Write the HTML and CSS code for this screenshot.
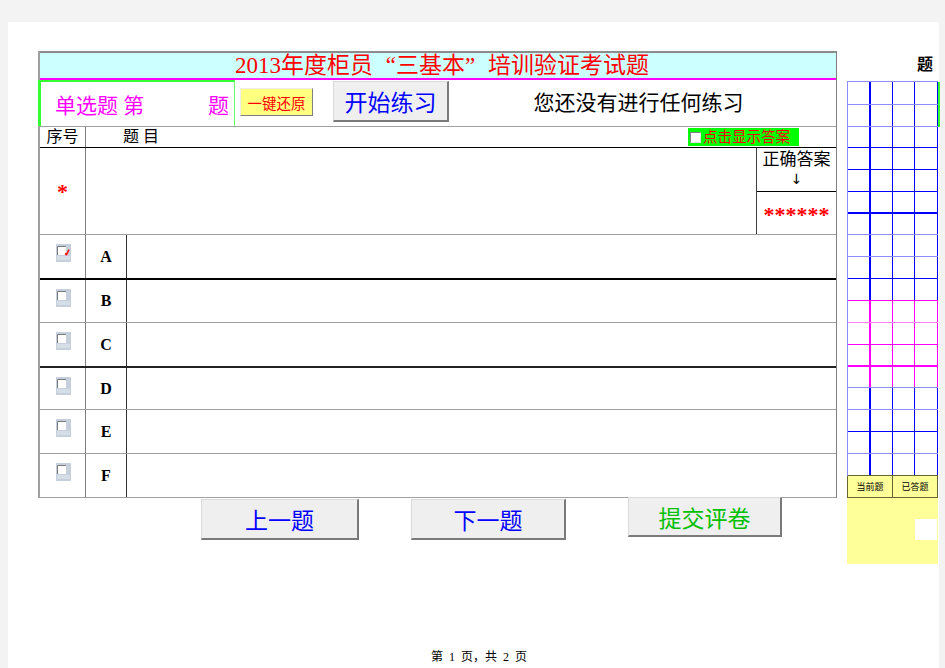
FILE: index.html
```html
<!DOCTYPE html>
<html lang="zh-CN">
<head>
<meta charset="utf-8">
<title>2013年度柜员“三基本”培训验证考试题</title>
<link rel="stylesheet" href="styles.css">
</head>
<body>
<div class="sheet">
  <div class="main">
    <div class="paper">
      <div class="frame">
        <div class="title">2013年度柜员<span class="ql">“</span>三基本<span class="qr">”</span>培训验证考试题</div>
        <div class="toolbar">
          <div class="qtype"><span>单选题 第</span><span>题</span></div>
          <div class="btn-reset">一键还原</div>
          <div class="btn btn-start">开始练习</div>
          <div class="status">您还没有进行任何练习</div>
        </div>
        <div class="head">
          <div class="c1">序号</div>
          <div class="c2">题&nbsp;目</div>
          <div class="show"><span class="box"></span>点击显示答案</div>
        </div>
        <div class="question">
          <div class="c1 star">*</div>
          <div class="qbody"></div>
          <div class="answer">
            <div class="ans-top">正确答案<br><span class="arrow">↓</span></div>
            <div class="ans-val">******</div>
          </div>
        </div>
        <div class="opt r-a">
          <div class="c1"><svg class="cb" width="15" height="18" viewBox="0 0 15 18"><rect width="15" height="18" fill="#c5d0dc"/><rect x="1" y="2" width="9" height="9" fill="#fff"/><path d="M1.5 11V2.5H10" stroke="#7a7a7a" fill="none"/><rect x="1" y="12" width="13" height="4" fill="#d5dde6"/><path d="M9 9.5 L10.5 10.5 L13 5.5" stroke="#ff1010" stroke-width="1.6" fill="none"/></svg></div>
          <div class="letter">A</div>
          <div class="ocell"></div>
        </div>
        <div class="opt r-b">
          <div class="c1"><svg class="cb" width="15" height="18" viewBox="0 0 15 18"><rect width="15" height="18" fill="#c5d0dc"/><rect x="1" y="2" width="9" height="9" fill="#fff"/><path d="M1.5 11V2.5H10" stroke="#7a7a7a" fill="none"/><rect x="1" y="12" width="13" height="4" fill="#d5dde6"/></svg></div>
          <div class="letter">B</div>
          <div class="ocell"></div>
        </div>
        <div class="opt r-c">
          <div class="c1"><svg class="cb" width="15" height="18" viewBox="0 0 15 18"><rect width="15" height="18" fill="#c5d0dc"/><rect x="1" y="2" width="9" height="9" fill="#fff"/><path d="M1.5 11V2.5H10" stroke="#7a7a7a" fill="none"/><rect x="1" y="12" width="13" height="4" fill="#d5dde6"/></svg></div>
          <div class="letter">C</div>
          <div class="ocell"></div>
        </div>
        <div class="opt r-d">
          <div class="c1"><svg class="cb" width="15" height="18" viewBox="0 0 15 18"><rect width="15" height="18" fill="#c5d0dc"/><rect x="1" y="2" width="9" height="9" fill="#fff"/><path d="M1.5 11V2.5H10" stroke="#7a7a7a" fill="none"/><rect x="1" y="12" width="13" height="4" fill="#d5dde6"/></svg></div>
          <div class="letter">D</div>
          <div class="ocell"></div>
        </div>
        <div class="opt r-e">
          <div class="c1"><svg class="cb" width="15" height="18" viewBox="0 0 15 18"><rect width="15" height="18" fill="#c5d0dc"/><rect x="1" y="2" width="9" height="9" fill="#fff"/><path d="M1.5 11V2.5H10" stroke="#7a7a7a" fill="none"/><rect x="1" y="12" width="13" height="4" fill="#d5dde6"/></svg></div>
          <div class="letter">E</div>
          <div class="ocell"></div>
        </div>
        <div class="opt r-f">
          <div class="c1"><svg class="cb" width="15" height="18" viewBox="0 0 15 18"><rect width="15" height="18" fill="#c5d0dc"/><rect x="1" y="2" width="9" height="9" fill="#fff"/><path d="M1.5 11V2.5H10" stroke="#7a7a7a" fill="none"/><rect x="1" y="12" width="13" height="4" fill="#d5dde6"/></svg></div>
          <div class="letter">F</div>
          <div class="ocell"></div>
        </div>
      </div>
      <div class="nav">
        <div class="btn prev">上一题</div>
        <div class="btn next">下一题</div>
        <div class="btn submit">提交评卷</div>
      </div>
    </div>
    <div class="side">
      <div class="side-head">题</div>
      <div class="side-body">
        <div class="grid">
          <div class="row lt h23"><span></span><span></span><span></span><span></span></div>
          <div class="row lt"><span></span><span></span><span></span><span></span></div>
          <div class="row h21"><span></span><span></span><span></span><span></span></div>
          <div class="row"><span></span><span></span><span></span><span></span></div>
          <div class="row"><span></span><span></span><span></span><span></span></div>
          <div class="row thick"><span></span><span></span><span></span><span></span></div>
          <div class="row lt h21"><span></span><span></span><span></span><span></span></div>
          <div class="row lt"><span></span><span></span><span></span><span></span></div>
          <div class="row"><span></span><span></span><span></span><span></span></div>
          <div class="row mgb"><span></span><span></span><span></span><span></span></div>
          <div class="row mg mgl"><span></span><span></span><span></span><span></span></div>
          <div class="row mg mgb"><span></span><span></span><span></span><span></span></div>
          <div class="row mg mgb thick"><span></span><span></span><span></span><span></span></div>
          <div class="row mg lt h21"><span></span><span></span><span></span><span></span></div>
          <div class="row lt"><span></span><span></span><span></span><span></span></div>
          <div class="row"><span></span><span></span><span></span><span></span></div>
          <div class="row lt"><span></span><span></span><span></span><span></span></div>
          <div class="row olive"><span></span><span></span><span></span><span></span></div>
          <div class="legend"><span>当前题</span><span>已答题</span></div>
          <div class="yblock"><div class="white"></div></div>
        </div>
        <div class="gbar"></div>
      </div>
    </div>
  </div>
  <div class="pagefoot">第 1 页，共 2 页</div>
</div>
</body>
</html>
```

FILE: styles.css
```css
* { box-sizing: border-box; }
html, body { margin: 0; padding: 0; }
body {
  background: #f3f3f3;
  font-family: "Liberation Serif", "Noto Sans CJK SC", serif;
  color: #000;
}
.sheet {
  margin: 22px 0 0 8px;
  width: 931px;
  height: 646px;
  background: #fff;
  padding: 29px 0 4px 30px;
  display: flex;
  flex-direction: column;
}
.main { display: flex; align-items: flex-start; }
.paper { flex: none; width: 799px; }
.frame {
  border-left: 2px solid #a0a0a0;
  border-right: 1px solid #808080;
}
.title {
  height: 29px;
  border-top: 2px solid #8c8c8c;
  border-bottom: 2px solid #ff00ff;
  background: #ccffff;
  color: #ff0000;
  font-size: 23px;
  line-height: 25px;
  text-align: center;
  padding-left: 8px;
  white-space: nowrap;
}
.ql, .qr { display: inline-block; width: 1em; }
.ql { text-align: right; }
.qr { text-align: left; }

.toolbar { display: flex; align-items: flex-start; height: 46px; }
.qtype {
  flex: none;
  width: 197px;
  height: 46px;
  margin-left: -2px;
  border-left: 3px solid #33ff33;
  border-top: 2px solid #33ff33;
  border-right: 1px solid #66ff66;
  display: flex;
  justify-content: space-between;
  align-items: center;
  padding: 0 5px 0 14px;
  color: #ff00ff;
  font-size: 21px;
  white-space: nowrap;
}
.btn-reset {
  flex: none;
  width: 73px;
  height: 28px;
  margin: 8px 0 0 5px;
  background: #ffff80;
  border: 1px solid;
  border-color: #eeeeee #808080 #808080 #eeeeee;
  color: #ff0000;
  font-size: 14.5px;
  display: flex;
  align-items: center;
  justify-content: center;
}
.btn {
  flex: none;
  background: #efefef;
  border-style: solid;
  border-width: 1px 2px 2px 1px;
  border-color: #dadada #7a7a7a #7a7a7a #dadada;
  display: flex;
  align-items: center;
  justify-content: center;
  white-space: nowrap;
}
.btn-start {
  width: 116px;
  height: 41px;
  margin: 1px 0 0 20px;
  color: #0000ff;
  font-size: 23px;
}
.status {
  flex: 1;
  text-align: center;
  line-height: 46px;
  font-size: 21px;
  padding-right: 8px;
  white-space: nowrap;
}

.head {
  display: flex;
  height: 22px;
  border-top: 1px solid #a0a0a0;
  border-bottom: 1px solid #000;
  font-size: 16px;
  line-height: 20px;
}
.c1 {
  flex: none;
  width: 46px;
  border-right: 1px solid #808080;
  text-align: center;
}
.head .c2 { padding-left: 37px; }
.show {
  margin: 1px 37px 0 auto;
  height: 18px;
  width: 111px;
  background: #00ff00;
  color: #ff0000;
  font-size: 14.5px;
  line-height: 18px;
  display: flex;
  align-items: center;
  padding-left: 2px;
  white-space: nowrap;
}
.show .box {
  flex: none;
  width: 11px;
  height: 11px;
  background: #fff;
  border: 1px solid;
  border-color: #808080 #e0e0e0 #e0e0e0 #808080;
  margin-right: 2px;
}

.question {
  display: flex;
  height: 87px;
  border-bottom: 1px solid #a0a0a0;
}
.star {
  color: #ff0000;
  font-size: 22px;
  font-weight: bold;
  line-height: 22px;
  padding-top: 33px;
}
.qbody { flex: 1; }
.answer {
  flex: none;
  width: 80px;
  border-left: 1px solid #404040;
  display: flex;
  flex-direction: column;
}
.ans-top {
  height: 44px;
  border-bottom: 1px solid #000;
  text-align: center;
  font-size: 17px;
  line-height: 19px;
  padding-top: 2px;
}
.arrow { font-family: "DejaVu Sans", sans-serif; font-size: 14px; }
.ans-val {
  flex: 1;
  color: #ff0000;
  font-size: 22px;
  font-weight: bold;
  text-align: center;
  line-height: 22px;
  padding-top: 12px;
}

.opt { display: flex; border-bottom: 1px solid #a0a0a0; }
.opt .c1 {
  display: flex;
  justify-content: center;
  align-items: flex-start;
  padding-top: 9px;
  padding-left: 1px;
}
.cb { display: block; }
.letter {
  flex: none;
  width: 41px;
  border-right: 1px solid #333;
  font-weight: bold;
  font-size: 16px;
  display: flex;
  align-items: center;
  justify-content: center;
}
.ocell { flex: 1; }
.r-a { height: 45px; border-bottom: 2px solid #000; }
.r-b { height: 43px; }
.r-c { height: 45px; border-bottom: 2px solid #222; }
.r-d { height: 42px; }
.r-e { height: 44px; }
.r-f { height: 44px; }

.nav { display: flex; align-items: flex-start; padding-top: 1px; }
.nav .btn { font-size: 23px; color: #0000ff; }
.prev { width: 158px; height: 41px; margin-left: 163px; }
.next { width: 155px; height: 41px; margin-left: 52px; }
.nav .submit { width: 154px; height: 40px; margin-left: 62px; margin-top: -2px; color: #00c000; }

.side { flex: none; margin-left: 10px; width: 93px; }
.side-head {
  height: 30px;
  text-align: right;
  padding-right: 7px;
  font-size: 16px;
  line-height: 28px;
  font-weight: bold;
}
.side-body { display: flex; align-items: flex-start; }
.grid {
  flex: none;
  width: 91px;
  border-left: 1px solid #8c8cff;
  border-top: 1px solid #8c8cff;
}
.gbar { flex: none; width: 2px; height: 45px; background: #33ff33; margin-top: 1px; }
.row {
  display: grid;
  grid-template-columns: 23px 22px 22px 23px;
  height: 22px;
  border-bottom: 1px solid #0000ff;
}
.row span { border-right: 1px solid #0000ff; }
.row span:first-child { border-right-width: 2px; }
.row.lt { border-bottom-color: #8c8cff; }
.row.mg span { border-right-color: #ff00ff; }
.row.mgb { border-bottom-color: #ff00ff; }
.row.mgl { border-bottom-color: #ff80ff; }
.row.thick { border-bottom-width: 2px; }
.row.olive { border-bottom-color: #666633; }
.h21 { height: 21px; }
.h23 { height: 23px; }
.legend {
  display: flex;
  height: 22px;
  margin-left: -1px;
  width: 91px;
  background: #ffff99;
  border-left: 1px solid #666633;
  border-bottom: 1px solid #666633;
  font-family: "Noto Sans CJK SC", sans-serif;
  font-size: 9px;
}
.legend span {
  width: 45px;
  border-right: 1px solid #666633;
  display: flex;
  align-items: center;
  justify-content: center;
}
.yblock {
  margin-left: -1px;
  width: 91px;
  height: 66px;
  background: #ffff99;
  display: flex;
  justify-content: flex-end;
  align-items: flex-start;
}
.yblock .white { width: 22px; height: 21px; background: #fff; margin-top: 21px; margin-right: 1px; }

.pagefoot {
  margin-top: auto;
  margin-left: -30px;
  text-align: center;
  font-size: 12px;
  line-height: 14px;
  padding-left: 11px;
  word-spacing: 3px;
}
```
